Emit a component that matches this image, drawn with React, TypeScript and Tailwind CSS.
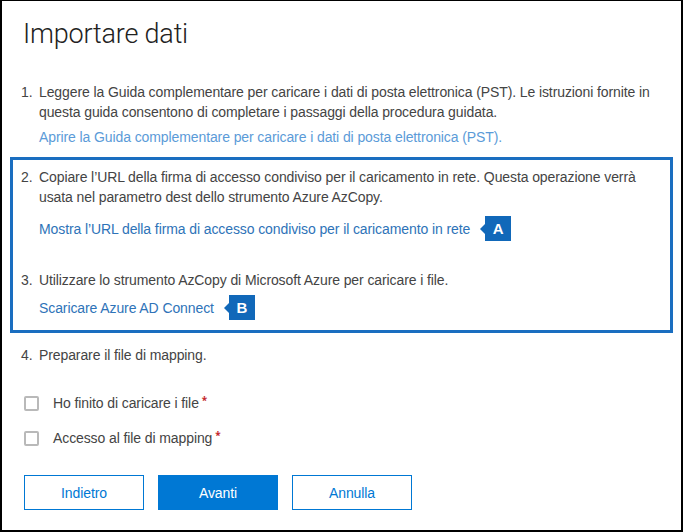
import React from "react";

const body = "font-['Liberation_Sans',Arial,sans-serif] text-[14px] leading-[20px] tracking-[-0.1px]";

function Badge({ letter }: { letter: string }) {
  return (
    <span className="flex items-center">
      <span className="w-0 h-0 border-y-[5px] border-y-transparent border-r-[5px] border-r-[#1168b9]" />
      <span className="w-[26px] h-[25px] bg-[#1168b9] text-white font-bold text-[15px] flex items-center justify-center font-['Liberation_Sans',Arial,sans-serif]">
        {letter}
      </span>
    </span>
  );
}

function Check({ label, mt }: { label: string; mt: string }) {
  return (
    <div className={`flex items-center ${mt} pl-[22px]`}>
      <span className="w-[15px] h-[15px] border-2 border-[#b9b9b9] rounded-[2px] bg-white" />
      <span className={`${body} text-[#444] ml-[14px]`}>{label}</span>
      <span className="text-[#c4262c] text-[10px] leading-none font-bold ml-[3px] -mt-[7px]">*</span>
    </div>
  );
}

export default function App() {
  return (
    <div className="w-[683px] h-[532px] bg-white border-l-2 border-r-2 border-b-2 border-t border-black box-border">
      <h1 className="pl-[21px] pt-[17px] font-['Roboto',sans-serif] font-light text-[27px] leading-[32px] text-[#222] tracking-[-0.2px]">
        Importare dati
      </h1>

      <div className={`${body} text-[#444]`}>
        <div className="flex pl-[19px] mt-[32px]">
          <span className="w-[18px] shrink-0">1.</span>
          <div className="pr-[20px]">
            <p>
              Leggere la Guida complementare per caricare i dati di posta elettronica (PST). Le istruzioni fornite in
              questa guida consentono di completare i passaggi della procedura guidata.
            </p>
            <p className="mt-[5px] text-[#5b9bd8]">
              Aprire la Guida complementare per caricare i dati di posta elettronica (PST).
            </p>
          </div>
        </div>

        <div className="mx-[8px] mt-[10px] border-[3px] border-[#1a6ec0] pl-[8px] pt-[7px] pb-[10px]">
          <div className="flex">
            <span className="w-[18px] shrink-0">2.</span>
            <div className="pr-[20px]">
              <p>
                Copiare l’URL della firma di accesso condiviso per il caricamento in rete. Questa operazione verrà usata
                nel parametro dest dello strumento Azure AzCopy.
              </p>
              <div className="flex items-center mt-[9px] h-[25px]">
                <span className="text-[#2e73b8]">Mostra l’URL della firma di accesso condiviso per il caricamento in rete</span>
                <span className="ml-[10px]">
                  <Badge letter="A" />
                </span>
              </div>
            </div>
          </div>
          <div className="flex mt-[29px]">
            <span className="w-[18px] shrink-0">3.</span>
            <div>
              <p>Utilizzare lo strumento AzCopy di Microsoft Azure per caricare i file.</p>
              <div className="flex items-center mt-[5px] h-[25px]">
                <span className="text-[#2e73b8]">Scaricare Azure AD Connect</span>
                <span className="ml-[10px]">
                  <Badge letter="B" />
                </span>
              </div>
            </div>
          </div>
        </div>

        <div className="flex pl-[19px] mt-[12px]">
          <span className="w-[18px] shrink-0">4.</span>
          <p>Preparare il file di mapping.</p>
        </div>
      </div>

      <Check label="Ho finito di caricare i file" mt="mt-[28px]" />
      <Check label="Accesso al file di mapping" mt="mt-[15px]" />

      <div className="flex gap-[14px] pl-[22px] mt-[27px]">
        <button className={`${body} w-[120px] h-[35px] border border-[#0078d4] text-[#0078d4] bg-white`}>Indietro</button>
        <button className={`${body} w-[120px] h-[35px] border border-[#0078d4] text-white bg-[#0078d4]`}>Avanti</button>
        <button className={`${body} w-[120px] h-[35px] border border-[#0078d4] text-[#0078d4] bg-white`}>Annulla</button>
      </div>
    </div>
  );
}
